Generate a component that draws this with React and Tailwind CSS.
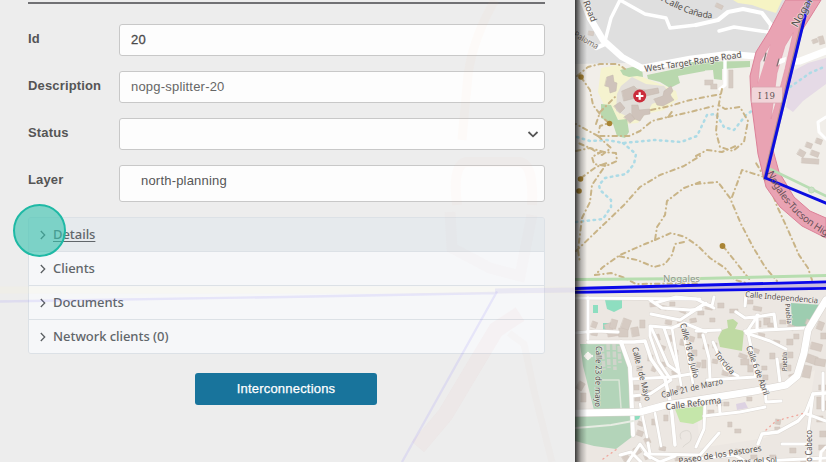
const BUILDINGS = [
  [593, 321, 5, 6, 20], [592, 330, 6, 5, 10], [604, 325, 7, 9, -20], [612, 319, 6, 9, 15], [608, 334, 18, 3, -8],
  [619, 328, 9, 9, 0], [624, 318, 8, 10, 20], [631, 328, 7, 9, -10], [640, 320, 5, 8, 0], [650, 303, 6, 4, -8],
  [660, 305, 7, 4, 10], [670, 302, 5, 4, 0], [681, 308, 6, 4, 20], [666, 320, 6, 4, 10], [678, 322, 5, 5, 10],
  [690, 319, 6, 4, -10], [655, 335, 4, 6, -15], [661, 345, 5, 4, 20], [668, 336, 5, 6, -15], [674, 350, 4, 5, 0],
  [681, 339, 4, 6, 10], [690, 336, 5, 5, 15], [692, 350, 5, 6, 0], [697, 362, 4, 5, 10], [634, 354, 5, 6, -10],
  [637, 366, 5, 5, 0], [648, 355, 5, 6, 0], [653, 366, 4, 5, 20], [662, 362, 5, 4, 10], [672, 371, 6, 4, -10],
  [634, 385, 5, 5, 0], [647, 390, 5, 4, 10], [664, 390, 5, 4, 0], [677, 386, 4, 4, 0], [635, 397, 5, 4, 0],
  [639, 421, 5, 4, 20], [638, 430, 6, 5, 20], [644, 439, 5, 6, -25], [633, 449, 6, 7, -30], [644, 455, 7, 5, -20],
  [652, 419, 5, 6, 0], [664, 415, 4, 6, 0], [622, 457, 6, 6, -30], [660, 446, 6, 4, 10], [675, 457, 7, 4, -10],
  [580, 381, 6, 8, 30], [581, 393, 5, 9, 0], [706, 305, 7, 4, 10], [718, 303, 6, 5, 0], [730, 309, 8, 4, 0],
  [698, 311, 6, 4, 0], [710, 318, 5, 4, 0], [698, 333, 4, 5, 0], [704, 344, 5, 5, 10], [702, 360, 4, 8, 0],
  [713, 343, 4, 5, 0], [713, 359, 5, 4, 10], [723, 370, 6, 5, 10], [731, 373, 5, 5, 25], [740, 353, 8, 4, 20],
  [741, 359, 8, 6, 0], [748, 365, 5, 7, 0], [754, 348, 6, 4, 20], [756, 321, 5, 6, 0], [764, 318, 6, 7, 0],
  [768, 323, 6, 4, 0], [774, 340, 6, 4, 10], [759, 333, 6, 4, 10], [770, 353, 5, 6, 0], [777, 365, 7, 5, -20],
  [787, 339, 6, 6, 0], [794, 334, 5, 5, 0], [787, 352, 6, 6, 0], [786, 365, 5, 6, 0], [789, 375, 6, 4, -15],
  [762, 366, 5, 4, 0], [763, 375, 5, 5, 0], [747, 300, 6, 4, 0], [754, 306, 8, 4, 10], [780, 320, 6, 4, 0],
  [789, 324, 6, 5, 20], [806, 353, 13, 8, 20], [812, 342, 11, 7, 15], [804, 365, 8, 12, 10], [816, 358, 10, 7, 10],
  [821, 333, 5, 6, 0], [819, 385, 7, 5, 0], [817, 397, 5, 12, 0], [822, 401, 4, 9, 0], [817, 416, 6, 6, 0],
  [708, 410, 6, 5, 0], [717, 402, 5, 4, 0], [728, 422, 4, 5, 0], [735, 429, 6, 4, 0], [776, 419, 5, 5, 10],
  [775, 427, 5, 4, 0], [736, 449, 6, 4, 10], [751, 455, 6, 4, 0], [770, 455, 6, 5, 0], [790, 448, 6, 5, 0],
  [801, 458, 7, 4, 0], [820, 431, 6, 6, 0], [819, 445, 7, 5, 0], [724, 402, 5, 4, 0], [747, 397, 5, 4, 0],
  [807, 142, 6, 5, 20], [800, 149, 7, 6, 30], [812, 150, 8, 5, 20], [802, 158, 17, 5, 4], [817, 138, 6, 5, 20],
  [812, 40, 5, 4, -20], [818, 37, 5, 8, -15], [705, 80, 8, 5, 0], [711, 84, 6, 5, 0], [729, 70, 4, 18, 0],
  [717, 3, 7, 4, 25], [589, 31, 5, 4, 10], [579, 35, 8, 4, 20], [807, 319, 8, 5, 20], [819, 321, 6, 8, 20],
]

const CAMPUS = [
  "M607 77l6-2 1 7 3 1-1 8-6 2-1-6-4-1z",
  "M622 91l12-5 3 3 9 1 12-2 1 5-13 3-2 4-5 1-3-3-12 3z",
  "M654 99l9-3 1-5 7-5 2 5-3 4 4 5-11 6-6-1-2-4z",
  "M632 105l6 0 1 5 11-1 0 5-6 1-4 6-8-3z",
  "M614 106l6-4 5 6-5 5z",
  "M624 117l6-4 5 6-5 4z",
]

const TRAILS = [
  "M577 76L588 67 600 64 618 64 625 69",
  "M581 77L590 90 593 105 603 118 609 123 600 126 598 136 576 124",
  "M600 136L629 136 640 131 652 121 668 117 674 109",
  "M651 110L670 106 686 101 700 98 722 94",
  "M668 117L690 112 714 106",
  "M598 136L611 148 602 155 590 148 576 142",
  "M576 151L590 148 604 152 616 153 617 161 606 166 594 164 592 157 603 151",
  "M581 178L596 167 607 163 592 185 590 202 582 218 578 250 580 263",
  "M576 251L600 228 624 205 640 187 660 175 684 166 700 156",
  "M722 89L718 108 716 132 720 147 733 151 744 142 748 121 740 107 725 109 717 104",
  "M696 156L707 150 722 152 738 145",
  "M700 182L684 188 667 201 665 215 657 227 655 240 645 244 620 255 603 267 595 275",
  "M655 240L671 233 685 237 698 246 710 258 725 268 735 280 750 284",
  "M684 242L675 244 672 255 665 264 654 267 637 260 618 256",
  "M595 275L611 273 625 278 636 284 700 283",
  "M696 184L718 182 730 198 741 224 753 247 765 267 777 281",
  "M732 197L738 181 742 170 758 175 767 178 777 206 788 230 799 255 808 268 812 280",
  "M765 178L756 163",
  "M723 246L735 261 750 280",
  "M596 124L600 112 616 96",
]

const ROADS = [
  ["M588 298L588 339 M575 298L700 299", 3],
  ["M588 342L634 342 645 341 651 359 665 379 671 405 675 445", 3.5],
  ["M621 342L630 367 631 385 633 435", 4],
  ["M631 379L672 377 697 373", 3],
  ["M632 396L650 394 671 380 659 362 650 336 650 326 672 328 684 323 706 332", 3],
  ["M651 327L668 365 678 372 M664 328L679 373", 3],
  ["M672 328L681 385 M682 326L690 366 694 390 M640 404L647 437 M655 413L661 446", 2.6],
  ["M650 300L662 308 690 310 701 309 M651 314L680 320 706 303", 3],
  ["M655 303L676 297 696 299 714 308", 3],
  ["M628 462L640 444 650 458 M620 455L631 452 641 462 M648 443L650 454 700 455 719 433", 3],
  ["M645 454L660 462 675 456", 3],
  ["M575 333L596 331 618 332", 3],
  ["M736 312L745 318 762 316 774 314 776 329 M757 315L757 331 747 333 M745 331L786 329 807 328", 3.2],
  ["M758 315L746 333 770 341 786 349", 3],
  ["M696 331L720 330 M703 335L709 358 710 379 M713 342L725 369 738 376", 3],
  ["M707 380L755 377 756 371 748 333", 3],
  ["M777 359L780 383 M765 387L766 402 781 401", 3],
  ["M705 404L704 429 696 447 M719 397L720 414 M704 416L740 412 765 407", 3],
  ["M758 444L762 434 778 432 798 421 806 412 813 394 826 393", 3.3],
  ["M807 414L826 421 M823 373L823 410 M813 394L808 433 808 462", 3],
  ["M782 444L807 444 M696 459L735 455 746 462 M760 461L826 458", 3],
  ["M696 309L704 304 712 306 714 297 M746 294L745 306", 3],
]

const LABELS = [
  { t: "Road", x: 583, y: 2, r: 68, w: 22, s: 9 },
  { t: "Paloma", x: 573, y: 36, r: 30, w: 27, s: 8.5, c: "#77726d" },
  { t: "West Target Range Road", x: 645, y: 72, r: -8.5, w: 98, s: 9 },
  { t: "Calle Independencia", x: 745, y: 297, r: 5, w: 73, s: 8.2 },
  { t: "Nogales", x: 663, y: 282, r: 0, w: 37, s: 8.8, c: "#8f978a" },
  { t: "Nogales", x: 797, y: 28, r: -60, w: 43, s: 10.5 },
  { t: "Calle 21 de Marzo", x: 662, y: 398, r: -13, w: 63, s: 8.5 },
  { t: "Calle Reforma", x: 666, y: 410, r: -7, w: 56, s: 9.2 },
  { t: "Calle 23 de mayo", x: 596, y: 346, r: 91, w: 61, s: 8.5 },
  { t: "Calle 1 de Mayo", x: 632, y: 348, r: 76, w: 55, s: 8.5 },
  { t: "Calle 18 de Julio", x: 680, y: 324, r: 76, w: 56, s: 8.5 },
  { t: "Calle 6 de Abril", x: 746, y: 347, r: 70, w: 52, s: 8.5 },
  { t: "Torcida", x: 714, y: 354, r: 51, w: 27, s: 8.2 },
  { t: "Puebla", x: 785, y: 304, r: 84, w: 20, s: 7 },
  { t: "Puebla", x: 787, y: 371, r: -90, w: 19, s: 7 },
  { t: "Paseo de los Pastores", x: 679, y: 464, r: -9, w: 84, s: 8.5 },
  { t: "Lomas del Sol", x: 728, y: 465, r: -3, w: 49, s: 8 },
  { t: "Paseo Cabeco", x: 812, y: 478, r: -90, w: 48, s: 8 },
]

function MapLabel({ t, x, y, r, w, s, c = "#54504d" }) {
  return (
    <text
      transform={`translate(${x} ${y}) rotate(${r})`}
      fontSize={s}
      textLength={w}
      lengthAdjust="spacingAndGlyphs"
      fill={c}
      stroke="#f4f1ee"
      strokeWidth="1.4"
      strokeOpacity="0.7"
      paintOrder="stroke"
    >
      {t}
    </text>
  )
}

function StreetMap() {
  return (
    <svg
      className="block h-full w-full font-['Noto_Sans','Open_Sans',sans-serif]"
      viewBox="575 0 251 462"
      preserveAspectRatio="none"
      fill="none"
      strokeLinejoin="round"
      strokeLinecap="round"
    >
      <rect x="575" width="251" height="462" fill="#f1eee9" />
      {/* urban areas */}
      <path d="M575 0H787L779 17 765 42 753 57 700 60 645 68 628 63 575 64z" fill="#dfdfdf" />
      <path d="M575 289L826 286V462H575z" fill="#ece7e2" />
      <path d="M696 405L780 390 815 370 808 415 765 438 700 448z" fill="#f0ebe5" />
      <path d="M733 0H782L776 13 766 10 752 5 738 3z" fill="#f6f4c4" />
      <path d="M791 72L808 63 826 58V84L803 101 793 112 786 107z" fill="#e5dae6" />
      {/* school grounds */}
      <path d="M601 68L618 65 640 76 660 84 676 91 678 99 664 110 645 114 638 123 626 124 607 112 598 92z" fill="#f5f3cf" />
      <path d="M620 70l12-3 10 1 1 9-6-1-8 1-6-2z M647 75L690 66 705 62V71L678 76 680 83 670 88 660 82 648 79z M601 104l10 1 7 15 9-1 2 13-4 6-8-2-4-12-12-6z" fill="#b9d8ae" />
      <path d="M686 62L750 61V67L722 69V80L714 79 713 70 696 71z" fill="#b9d8ae" />
      <path d="M621 86L632 77 646 84 664 86 672 96 652 104 647 113 630 118 616 111 617 94z" fill="#e3dfda" />
      {CAMPUS.map((d) => (
        <path key={d} d={d} fill="#cfc3bb" stroke="#c3b6ad" strokeWidth="0.5" />
      ))}
      {/* parks and pools */}
      <path d="M580 344H623L631 375 633 436 616 449 594 446 575 441V414H631V410H594L583 366z" fill="#b3d4b9" />
      <path d="M605 300h17v8l-8 4-7-3z M593 305h5v8h-5z M603 323h6v7h-6z M633 415l8-1-2 5-6 2z" fill="#8edec0" />
      <path d="M791 303L823 305 807 328 792 326z" fill="#9dcdb0" />
      <path d="M722 330l6-2-1-8 6-1 5 4-3 6 9 2-2 20-22-4-2-9z" fill="#bfdaa3" />
      <path d="M675 409L703 406V419L693 424 680 422z" fill="#c5e6aa" />
      <path d="M736 404l9-2 3 6-11 2z" fill="#ddd2e2" />
      {/* terraces inside the park */}
      <g stroke="#d0d4cb" strokeWidth="3.500">
        <path d="M602 346L604 370 M608 344L609 368 M614 344L615 370 M619 346L620 363" strokeDasharray="6 1.5" strokeLinecap="butt" />
        <path d="M603 380h16l2 28" stroke="#dbe5d8" strokeWidth="1.5" />
      </g>
      <circle cx="588" cy="356" r="3.2" fill="#f6f4f0" />
      <path d="M588 353v6 M585 356h7" stroke="#f6f4f0" strokeWidth="2.5" />

      {BUILDINGS.map(([x, y, w, h, a]) => (
        <rect
          key={`${x}-${y}`}
          x={x}
          y={y}
          width={w}
          height={h}
          transform={`rotate(${a} ${x} ${y})`}
          fill="#d6cbc3"
          stroke="#cdc1b8"
          strokeWidth="0.5"
        />
      ))}

      {/* minor streets */}
      <g stroke="#dcd7d2">
        {ROADS.map(([d, w]) => (
          <path key={d} d={d} strokeWidth={w + 1} />
        ))}
      </g>
      <g stroke="#ffffff">
        {ROADS.map(([d, w]) => (
          <path key={d} d={d} strokeWidth={w} />
        ))}
        <path d="M620 0L611 18 605 41 M620 0L645 14 666 18 670 28 696 25 M719 31L734 27 768 32 M725 56V85L720 89" strokeWidth="3.4" />
        <path d="M583 0L590 18 603 40 622 57 642 68" strokeWidth="6.5" />
        <path d="M596 48L605 44 M696 25L718 20 728 12 743 9 762 13 771 25 770 36 760 53" strokeWidth="4.2" />
        <path d="M642 68L690 59 729 54 764 57" strokeWidth="6.5" />
        <path d="M781 62L800 61 826 51" strokeWidth="7" />
        <path d="M575 428L588 427 611 425 633 421" stroke="#e7ece3" strokeWidth="2" />
        <path d="M575 413L640 412 666 405 755 391 786 385 797 376 804 353 808 330 826 300" stroke="#d8d3ce" strokeWidth="8" />
        <path d="M575 413L640 412 666 405 755 391 786 385 797 376 804 353 808 330 826 300" strokeWidth="7" />
        <path d="M826 117L818 122 819 132 826 139 M826 447L821 452 820 462" strokeWidth="3" />
      </g>
      <path d="M681 439q-3-6 3-8t7 4-3 8-5 4" stroke="#dcd8d2" />
      <path d="M603 459L617 449 M766 430L776 421 805 413" stroke="#f0a59b" strokeDasharray="1 4" strokeWidth="1.3" />

      {/* creeks */}
      <g stroke="#addbe6" strokeWidth="2.500" strokeDasharray="1.5 4.5">
        <path d="M577 137L590 141 607 140 623 143 655 140 681 142 697 136 707 115 716 114 724 127 734 130 746 115 756 108" />
        <path d="M623 143L636 154 634 164 626 174 605 178 599 185 600 190 611 200 611 207 603 219 576 222" />
        <path d="M790 87L810 73 826 66" />
      </g>

      {/* trails */}
      <g stroke="#c9b487" strokeWidth="2" strokeDasharray="4.5 3.8 0.4 3.8">
        {TRAILS.map((d) => (
          <path key={d} d={d} />
        ))}
      </g>
      <g fill="#a98434">
        <circle cx="581" cy="77" r="2.8" />
        <circle cx="609.500" cy="123.500" r="2.800" />
        <circle cx="580.500" cy="179" r="2.800" />
        <circle cx="579" cy="191" r="2.800" />
        <circle cx="722.500" cy="246" r="2.900" />
      </g>

      {/* motorway */}
      <path d="M786 0H821L801 32 792 65 781 112 773 150 779 172 794 197 810 211 826 218V238L802 226 780 207 766 187 758 154 751 100 750 76 756 52 768 33z" fill="#e9a3b3" stroke="#dc8198" strokeWidth="1" />
      <path d="M793 33L785 46 777 73 771 119 778 96 785 69z M770 45L760 62 758 83" fill="#f1e8e6" stroke="#df8fa2" strokeWidth="0.6" />
      <path d="M785 62L778 65 779 59 786 57z" fill="#ffffff" />
      <path d="M766 53L764 61 M779 59L777 66" stroke="#7f6f72" strokeWidth="1.2" />
      <path d="M768 168L826 196" stroke="#b9ddb4" strokeWidth="2.500" />
      <circle cx="811.500" cy="190" r="3" fill="#cddfc8" stroke="#b9ddb4" />
      <rect x="751.500" y="87" width="31" height="16" rx="1" fill="#f1d5d9" stroke="#dba4b0" strokeWidth="0.800" />
      <text x="758" y="98.800" fontFamily="DejaVu Serif, serif" fontSize="10" textLength="17" lengthAdjust="spacingAndGlyphs" fill="#5e5658">I 19</text>

      {/* border line and fibre routes */}
      <path d="M575 279.500L700 278.500 826 275.500" stroke="#b7deb0" strokeWidth="3" />
      <path d="M575 290L826 285" stroke="#b9a6d8" strokeWidth="6" strokeOpacity="0.7" />
      <path d="M808.500 -2L765 178.500" stroke="#73735f" strokeWidth="4" strokeOpacity="0.45" />
      <path d="M809.500 -2L765.500 178 828 204" stroke="#0c0de0" strokeWidth="2.900" strokeLinejoin="miter" />
      <path d="M575 288.500L828 281.800 M575 292.300L828 288.300" stroke="#0b08ea" strokeWidth="2.800" />

      <circle cx="639.700" cy="96" r="6.500" fill="#cb2c3b" />
      <path d="M639.700 92.300v7.400 M636 96h7.400" stroke="#ffffff" strokeWidth="2.200" strokeLinecap="butt" />

      {LABELS.map((l) => (
        <MapLabel key={`${l.t}-${l.x}`} {...l} />
      ))}
      <defs>
        <path id="canada" d="M645 -9Q668 5 685 12T714 18" />
        <path id="highway" d="M767 173Q782 205 806 223T862 252" />
      </defs>
      <text fontSize="8.800" fill="#54504d">
        <textPath href="#canada" textLength="73">West Calle Cañada</textPath>
      </text>
      <text fontSize="9.800" fill="#675158">
        <textPath href="#highway" textLength="112">Nogales-Tucson Highway</textPath>
      </text>
    </svg>
  )
}

/* Map showing faintly through the translucent form panel */
function GhostMap() {
  return (
    <svg className="pointer-events-none absolute inset-0 h-full w-full" viewBox="0 0 575 462" fill="none">
      <path d="M495 0Q473 38 468 75L462 140" stroke="#ffb090" strokeWidth="9" strokeOpacity="0.045" />
      <path d="M457 205Q452 165 466 162H520Q534 164 532 205" stroke="#ffa890" strokeWidth="10" strokeOpacity="0.04" />
      <path d="M450 212L452 248 490 268 520 276 532 215" stroke="#f0a8a0" strokeWidth="11" strokeOpacity="0.035" />
      <path d="M520 314L496 330 445 415 418 447" stroke="#f09090" strokeWidth="16" strokeOpacity="0.055" />
      <path d="M509 333L524 344 535 395 552 462" stroke="#f0b890" strokeWidth="7" strokeOpacity="0.04" />
      <path d="M0 301.500L285 297 495 293 M402 462L497 291.500" stroke="#7060ff" strokeWidth="2.300" strokeOpacity="0.12" />
      <path d="M495 291L575 290" stroke="#7060ff" strokeWidth="5" strokeOpacity="0.12" />
      <path d="M0 290H575" stroke="#fff8d0" strokeWidth="7" strokeOpacity="0.15" />
    </svg>
  )
}

const LABEL = "w-[91px] shrink-0 pt-1.5 text-[13px] leading-[18px] font-bold tracking-[0.15px] text-[#555]"
const INPUT = "flex h-8 flex-1 items-center rounded-[3px] border border-[#c8c8c8] bg-[#fdfdfd] px-[11px] text-[13px] leading-4 tracking-[0.2px] text-[#666]"

function Chevron() {
  return (
    <svg className="h-2.5 w-[7px] shrink-0" viewBox="0 0 7 10" fill="none" stroke="#5c6063" strokeWidth="1.3">
      <path d="M1.800 1L5.700 5 1.800 9" />
    </svg>
  )
}

function Section({ title, active, last }) {
  return (
    <div
      className={`flex items-center gap-[7px] pl-2.5 text-[13px] ${last ? "h-[33px]" : "h-[34px] border-b border-[#dce1e6] pt-px"} ${active ? "bg-[#e6eaed]" : "bg-[#f6f7f9]"}`}
    >
      <Chevron />
      <span className={`font-medium tracking-[-0.05px] text-[#61666a] ${active ? "underline underline-offset-2" : ""}`}>{title}</span>
    </div>
  )
}

export default function App() {
  return (
    <div className="flex h-[462px] w-[826px] overflow-hidden bg-[#ededed] font-['Liberation_Sans',Arial,sans-serif]">
      <main className="relative w-[575px] shrink-0 bg-[#ededed] pt-0.5 pr-[30px] pl-7">
        <div className="h-0.5 bg-[#717174]" />

        <form className="mt-5 flex flex-col gap-[15px]">
          <div className="flex">
            <label className={LABEL}>Id</label>
            <div className={INPUT}>
              <span className="text-[#4a4a4a] [-webkit-text-stroke:0.3px_#4a4a4a]">20</span>
            </div>
          </div>
          <div className="flex">
            <label className={LABEL}>Description</label>
            <div className={INPUT}>nopg-splitter-20</div>
          </div>
          <div className="flex">
            <label className={LABEL}>Status</label>
            <div className={`${INPUT} justify-end !pr-[5px]`}>
              <svg className="h-[7px] w-3" viewBox="0 0 12 7" fill="none" stroke="#555" strokeWidth="1.800">
                <path d="M1.500 1L6 5.300 10.500 1" />
              </svg>
            </div>
          </div>
          <div className="flex">
            <label className={LABEL}>Layer</label>
            <div className={`${INPUT} !h-[37px] !items-start !pt-[7px] !pl-[21px] !text-[#565656]`}>north-planning</div>
          </div>
        </form>

        <div className="mt-[15px] overflow-hidden rounded-[3px] border border-[#dce1e6] font-['Noto_Sans','Open_Sans',sans-serif]">
          <Section title="Details" active />
          <Section title="Clients" />
          <Section title="Documents" />
          <Section title="Network clients (0)" last />
        </div>

        <div className="mt-[19px] flex justify-center pr-px">
          <button className="h-8 w-[182px] rounded-[3px] bg-[#18749c] pb-px text-[13px] tracking-[0.2px] text-white [-webkit-text-stroke:0.25px_white]">
            Interconnections
          </button>
        </div>

        <GhostMap />
        <div className="absolute top-[204px] left-[13px] size-[53px] rounded-full border-2 border-[#1fb9a5] bg-[#36c2ad]/60" />
      </main>

      <aside className="relative min-w-0 flex-1">
        <StreetMap />
        <div className="absolute inset-y-0 left-0 w-3 bg-gradient-to-r from-black/75 via-black/25 to-transparent" />
      </aside>
    </div>
  )
}
